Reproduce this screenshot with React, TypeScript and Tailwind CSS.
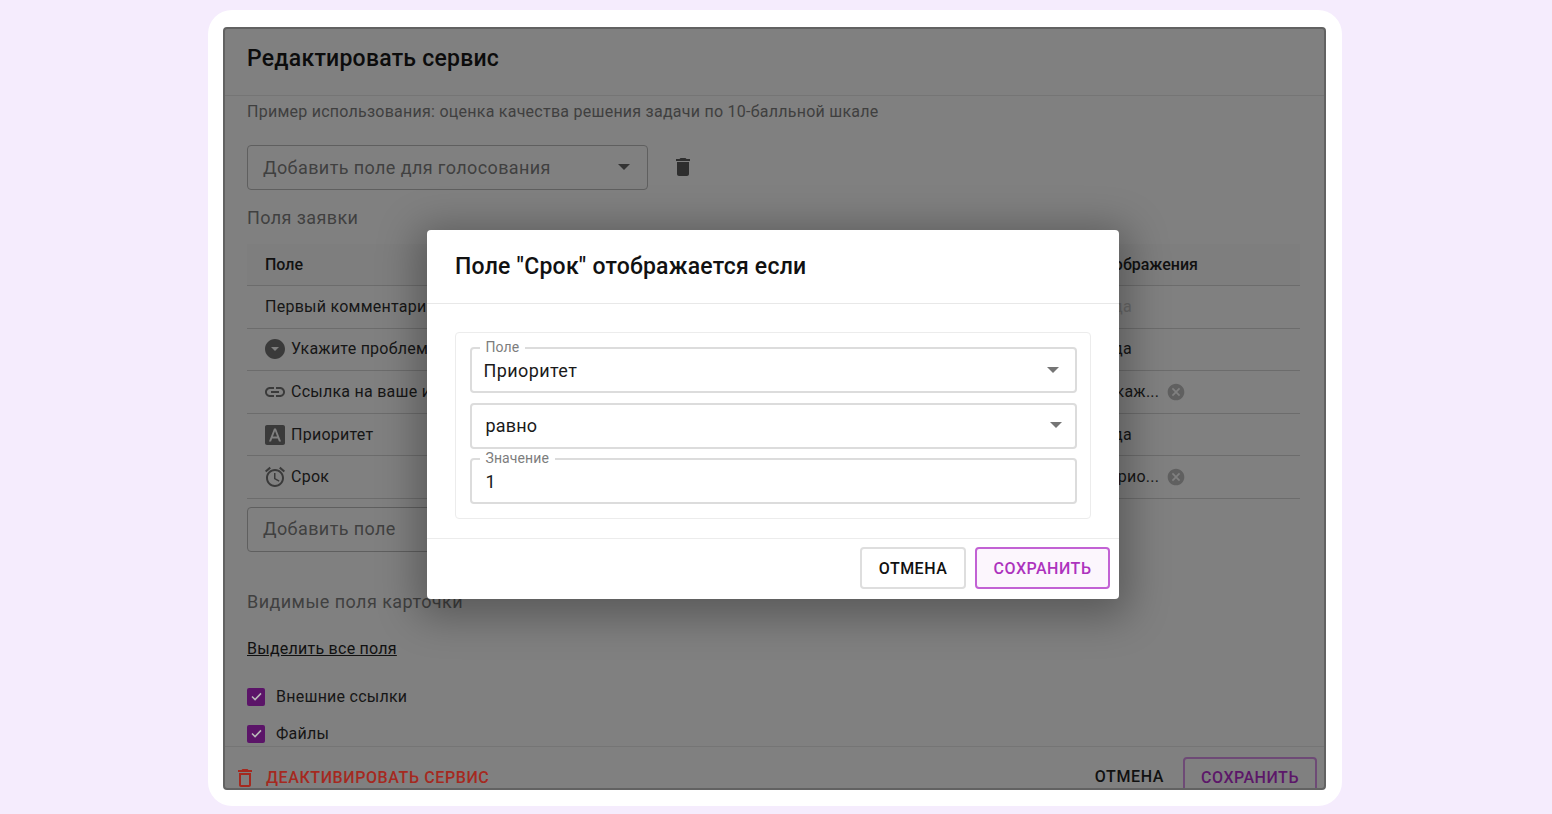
const font = { fontFamily: "Roboto, sans-serif" };

const icons: Record<string, string> = {
  down: "M12 2C6.48 2 2 6.48 2 12s4.48 10 10 10 10-4.48 10-10S17.52 2 12 2zm0 12l-4-4h8l-4 4z",
  link: "M3.9 12c0-1.71 1.39-3.1 3.1-3.1h4V7H7c-2.76 0-5 2.24-5 5s2.24 5 5 5h4v-1.9H7c-1.71 0-3.1-1.39-3.1-3.1zM8 13h8v-2H8v2zm9-6h-4v1.9h4c1.71 0 3.1 1.39 3.1 3.1s-1.39 3.1-3.1 3.1h-4V17h4c2.76 0 5-2.24 5-5s-2.24-5-5-5z",
  a: "M9.93 13.5h4.14L12 7.98zM20 2H4c-1.1 0-2 .9-2 2v16c0 1.1.9 2 2 2h16c1.1 0 2-.9 2-2V4c0-1.1-.9-2-2-2zm-4.05 16.5l-1.14-3H9.17l-1.12 3H5.96l5.11-13h1.87l5.11 13h-2.09z",
  clock:
    "M22 5.72l-4.6-3.86-1.29 1.53 4.6 3.86L22 5.72zM7.88 3.39L6.6 1.86 2 5.71l1.29 1.53 4.59-3.85zM12.5 8H11v6l4.75 2.85.75-1.23-4-2.37V8zM12 4c-4.97 0-9 4.03-9 9s4.02 9 9 9c4.97 0 9-4.03 9-9s-4.03-9-9-9zm0 16c-3.87 0-7-3.13-7-7s3.13-7 7-7 7 3.13 7 7-3.13 7-7 7z",
  cancel:
    "M12 2C6.47 2 2 6.47 2 12s4.47 10 10 10 10-4.47 10-10S17.53 2 12 2zm5 13.59L15.59 17 12 13.41 8.41 17 7 15.59 10.59 12 7 8.41 8.41 7 12 10.59 15.59 7 17 8.41 13.41 12 17 15.59z",
  trash: "M6 19c0 1.1.9 2 2 2h8c1.1 0 2-.9 2-2V7H6v12zM19 4h-3.5l-1-1h-5l-1 1H5v2h14V4z",
  trashOutline: "M6 19c0 1.1.9 2 2 2h8c1.1 0 2-.9 2-2V7H6v12zM8 9h8v10H8V9zm7.5-5l-1-1h-5l-1 1H5v2h14V4z",
};

const rows = [
  { icon: "", label: "Первый комментарий", cond: "да", muted: true },
  { icon: "down", label: "Укажите проблему", cond: "да" },
  { icon: "link", label: "Ссылка на ваше изделие", cond: "Укаж...", chip: true },
  { icon: "a", label: "Приоритет", cond: "да" },
  { icon: "clock", label: "Срок", cond: "Прио...", chip: true },
];

function Icon({ name, className }: { name: string; className: string }) {
  return (
    <svg viewBox="0 0 24 24" className={className} fill="currentColor">
      <path d={icons[name]} />
    </svg>
  );
}

function Caret({ className }: { className: string }) {
  return (
    <svg viewBox="0 0 10 5" className={className} fill="currentColor">
      <path d="M0 0l5 5 5-5z" />
    </svg>
  );
}

function Check() {
  return (
    <span className="flex h-[18px] w-[18px] shrink-0 items-center justify-center rounded-[2px] bg-[#5b1468]">
      <svg viewBox="0 0 12 10" className="h-[9px] w-[11px]" fill="none" stroke="#b9b9b9" strokeWidth="1.7">
        <path d="M1 5l3.4 3.4L11 1.5" />
      </svg>
    </span>
  );
}

function Legend({ text }: { text: string }) {
  return (
    <span className="absolute left-[8px] top-[-9px] bg-white px-[6px] text-[14px] leading-[14px] tracking-[0.1px] text-[#7d7d7d]">
      {text}
    </span>
  );
}

export default function App() {
  return (
    <div style={font} className="h-[814px] w-[1552px] overflow-hidden bg-[#f5ecfd] pl-[208px] pt-[10px]">
      <div className="relative h-[796px] w-[1134px] rounded-[24px] bg-white px-[15px] pt-[17px]">
        {/* dimmed service editor */}
        <div className="flex h-[763px] w-[1103px] flex-col overflow-hidden rounded-[4px] border-2 border-[#626262] bg-[#808080]">
          <div className="flex h-[67px] shrink-0 items-center border-b border-[#757575] pb-[6px] pl-[22px] pr-[24px] text-[23px] font-medium tracking-[0.24px] text-[#0c0c0c]">
            Редактировать сервис
          </div>

          <div className="min-h-0 flex-1 overflow-hidden pl-[22px] pr-[24px]">
            <p className="mt-[6px] text-[16px] leading-[20px] tracking-[0.25px] text-[#3f3f3f]">
              Пример использования: оценка качества решения задачи по 10-балльной шкале
            </p>

            <div className="mt-[23px] flex items-center">
              <div className="flex h-[45px] w-[401px] items-center justify-between rounded-[4px] border border-[#5f5f5f] pb-[1px] pl-[15px] pr-[17px] text-[18px] tracking-[0.4px] text-[#404040]">
                Добавить поле для голосования
                <Caret className="h-[6px] w-[12px] text-[#333333]" />
              </div>
              <Icon name="trash" className="mb-[2px] ml-[23px] h-[24px] w-[24px] text-[#2e2e2e]" />
            </div>

            <h3 className="mt-[16px] text-[18px] leading-[24px] tracking-[0.4px] text-[#404040]">Поля заявки</h3>

            <div className="mt-[14px] flex h-[42px] items-center justify-between border-b border-[#6c6c6c] bg-[#7e7e7e] px-[18px] text-[16px] font-medium text-[#111111]">
              <span>Поле</span>
              <span className="mr-[84px]">Условие отображения</span>
            </div>
            {rows.map((r) => (
              <div
                key={r.label}
                className="flex h-[42.6px] items-center border-b border-[#6c6c6c] px-[18px] text-[16px] tracking-[0.25px] text-[#161616]"
              >
                {r.icon && (
                  <span className="mr-[6px] flex w-[20px] justify-center">
                    <Icon name={r.icon} className="-mx-[2px] h-[24px] w-[24px] shrink-0 text-[#3a3a3a]" />
                  </span>
                )}
                <span>{r.label}</span>
                <span className={`ml-auto flex w-[169px] items-center ${r.muted ? "text-[#696969]" : ""}`}>
                  <span className={`w-[46px] whitespace-nowrap ${r.chip ? "-ml-[7px]" : ""}`}>{r.cond}</span>
                  {r.chip && <Icon name="cancel" className="ml-[14px] h-[20px] w-[20px] text-[#606060]" />}
                </span>
              </div>
            ))}

            <div className="mt-[8px] flex h-[45px] w-[401px] items-center rounded-[4px] border border-[#5f5f5f] pb-[2px] pl-[15px] text-[18px] tracking-[0.4px] text-[#404040]">
              Добавить поле
            </div>

            <h3 className="mt-[38px] text-[18px] leading-[24px] tracking-[0.44px] text-[#404040]">Видимые поля карточки</h3>
            <a className="mt-[25px] block text-[16px] leading-[20px] tracking-[0.25px] text-[#111111] underline">
              Выделить все поля
            </a>
            <label className="mt-[28px] flex items-center gap-[11px] text-[16px] leading-[20px] tracking-[0.25px] text-[#161616]">
              <Check /> Внешние ссылки
            </label>
            <label className="mt-[17px] flex items-center gap-[11px] text-[16px] leading-[20px] tracking-[0.25px] text-[#161616]">
              <Check /> Файлы
            </label>
          </div>

          <div className="flex h-[42px] shrink-0 items-start justify-between border-t border-[#757575] pl-[8px] pr-[7px] pt-[10px]">
            <div className="flex items-center pt-[9px] text-[16px] font-medium leading-[20px] tracking-[0.6px] text-[#a5291f]">
              <Icon name="trashOutline" className="mr-[9px] h-[24px] w-[24px]" />
              ДЕАКТИВИРОВАТЬ СЕРВИС
            </div>
            <div className="flex items-start">
              <span className="pt-[10px] text-[16px] font-medium leading-[20px] tracking-[0.6px] text-[#111111]">ОТМЕНА</span>
              <span className="ml-[19px] h-[42px] w-[134px] rounded-[4px] border-2 border-[#6e4a76] pt-[9px] text-center text-[16px] font-medium leading-[20px] tracking-[0.5px] text-[#5c1769]">
                СОХРАНИТЬ
              </span>
            </div>
          </div>
        </div>

        {/* condition modal over the editor */}
        <div className="absolute left-[219px] top-[220px] w-[692px] rounded-[4px] bg-white shadow-[0_8px_40px_10px_rgba(0,0,0,0.3)]">
          <div className="flex h-[74px] items-center border-b border-[#e8e8e8] px-[28px] pt-[2px] text-[23px] font-medium tracking-[0.24px] text-[#111111]">
            Поле "Срок" отображается если
          </div>
          <div className="px-[28px] pt-[28px]">
            <div className="flex flex-col gap-[10px] rounded-[4px] border border-[#ececec] px-[13.5px] pb-[14px] pt-[14px]">
              <div className="relative flex h-[46px] items-center justify-between rounded-[4px] border-2 border-[#dcdcdc] pl-[12px] pr-[16px] text-[18px] tracking-[0.4px] text-[#1a1a1a]">
                <Legend text="Поле" />
                <span className="pt-[1px]">Приоритет</span>
                <Caret className="h-[6px] w-[12px] text-[#757575]" />
              </div>
              <div className="flex h-[46px] items-center justify-between rounded-[4px] border-2 border-[#dcdcdc] pb-[2px] pl-[14px] pr-[13px] text-[18px] tracking-[0.2px] text-[#1a1a1a]">
                равно
                <Caret className="h-[6px] w-[12px] text-[#757575]" />
              </div>
              <div className="relative -mt-[1px] flex h-[46px] items-center rounded-[4px] border-2 border-[#dcdcdc] pl-[14px] text-[18px] text-[#1a1a1a]">
                <Legend text="Значение" />
                <span>1</span>
              </div>
            </div>
          </div>
          <div className="mt-[19px] flex h-[61px] items-start justify-end gap-[9px] border-t border-[#ececec] px-[9px] pt-[8px]">
            <span className="flex h-[42px] w-[106px] items-center justify-center rounded-[4px] border-2 border-[#dedede] pt-[1px] text-[16px] font-medium tracking-[0.5px] text-[#111111]">
              ОТМЕНА
            </span>
            <span className="flex h-[42px] w-[135px] items-center justify-center rounded-[4px] border-2 border-[#c262d4] bg-[#fcf6fd] pt-[1px] text-[16px] font-medium tracking-[0.5px] text-[#ad33bd]">
              СОХРАНИТЬ
            </span>
          </div>
        </div>
      </div>
    </div>
  );
}
